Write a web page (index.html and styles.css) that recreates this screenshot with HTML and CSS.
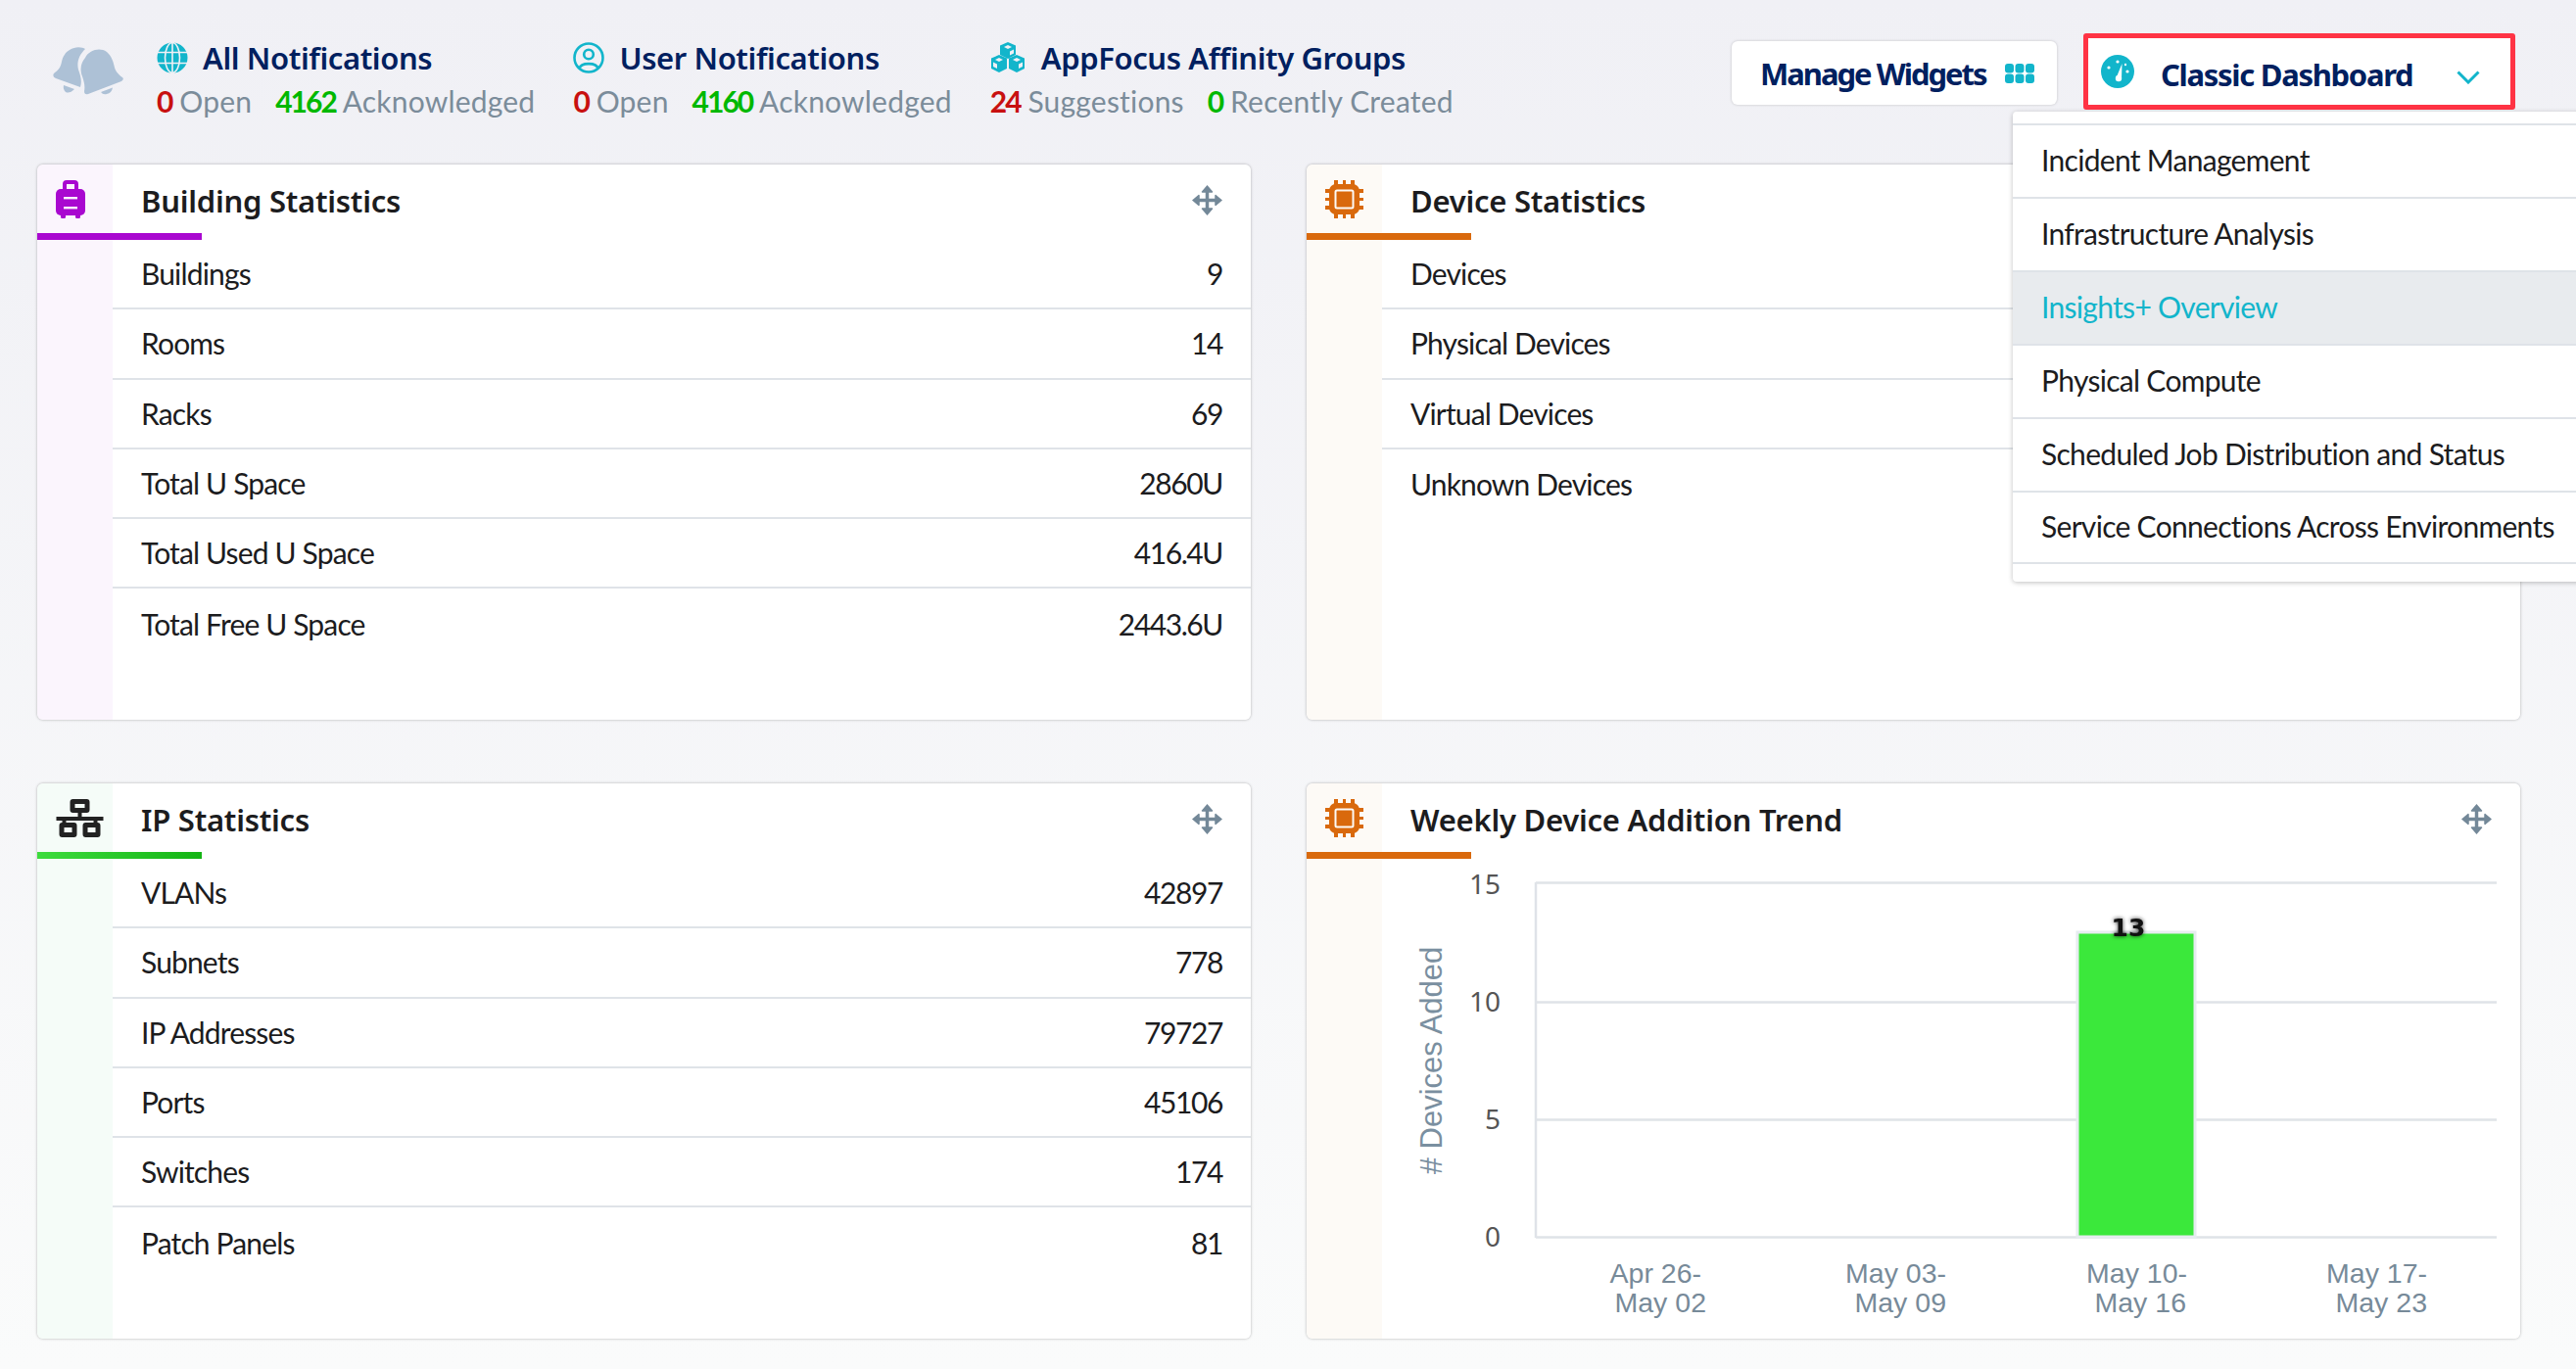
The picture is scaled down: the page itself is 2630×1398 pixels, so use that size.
FILE: index.html
```html
<!DOCTYPE html>
<html lang="en">
<head>
    <meta charset="UTF-8">
    <meta name="viewport" content="width=device-width, initial-scale=1.0">
    <title>Classic Dashboard</title>
    <link rel="stylesheet" href="styles.css">
</head>
<body>
    <header class="topbar">
        <svg class="bell-icon" viewBox="0 0 72 50">
            <path d="M17 3C23-1 30 0 33 2C27 8 24 15 26 23C28 29 30 34 28 41L3 32Q-1 30 1 27C5 24 8 21 9 15C10 10 13 5 17 3Z"/>
            <path d="M33 11C37 3 48 0 55 5C60 9 62 16 63 21C64 25 68 29 71 31Q73 33 70 35L36 48Q32 49 32 45C33 40 32 36 30 30C27 22 29 16 33 11Z"/>
            <path d="M11 39L22 43Q17 48 13 46Q10 43 11 39Z"/>
            <path d="M49 46L61 41.500Q60 47 55 48Q51 49 49 46Z"/>
        </svg>
        <div class="notif">
            <div class="notif-title">
                <svg class="notif-icon" viewBox="0 0 32 32">
                    <circle cx="16" cy="16" r="15.500" fill="#12b5cb"/>
                    <g fill="none" stroke="#f0f0f5" stroke-width="1.600">
                        <ellipse cx="16" cy="16" rx="7.500" ry="15.500"/>
                        <path d="M16 0V32M1 10.500H31M1 21.500H31"/>
                    </g>
                </svg>
                <span>All Notifications</span>
            </div>
            <div class="notif-sub">
                <span><b class="red">0</b> Open</span>
                <span><b class="green">4162</b> Acknowledged</span>
            </div>
        </div>
        <div class="notif">
            <div class="notif-title">
                <svg class="notif-icon" viewBox="0 0 32 32">
                    <g fill="none" stroke="#12b5cb" stroke-width="2.600">
                        <circle cx="16" cy="16" r="14.500"/>
                        <circle cx="16" cy="12.500" r="4.800"/>
                        <path d="M6.500 27C8 20.500 24 20.500 25.500 27"/>
                    </g>
                </svg>
                <span>User Notifications</span>
            </div>
            <div class="notif-sub">
                <span><b class="red">0</b> Open</span>
                <span><b class="green">4160</b> Acknowledged</span>
            </div>
        </div>
        <div class="notif">
            <div class="notif-title">
                <svg class="notif-icon cubes" viewBox="0 0 36 32">
                    <g fill="#12b5cb">
                        <path d="M18 0L26 3.500V13L18 17L10 13V3.500Z"/>
                        <path d="M9 13L17 16.500V27L9 31L1 27V16.500Z"/>
                        <path d="M27 13L35 16.500V27L27 31L19 27V16.500Z"/>
                    </g>
                    <g fill="#f0f0f5">
                        <path d="M18 3L22 5L18 7L14 5Z"/>
                        <path d="M20 9.500L24 7.500V11.500L20 13.500Z"/>
                        <path d="M9 16L13 18L9 20L5 18Z"/>
                        <path d="M3 20.500L7 22.500V27L3 25Z"/>
                        <path d="M27 16L31 18L27 20L23 18Z"/>
                        <path d="M29 22.500L33 20.500V25L29 27Z"/>
                    </g>
                </svg>
                <span>AppFocus Affinity Groups</span>
            </div>
            <div class="notif-sub">
                <span><b class="red">24</b> Suggestions</span>
                <span><b class="green">0</b> Recently Created</span>
            </div>
        </div>

        <div class="actions">
            <button class="manage-btn">
                <span>Manage Widgets</span>
                <svg class="grid-icon" viewBox="0 0 30 20" fill="#12b5cb">
                    <rect x="0" y="0" width="9" height="9.500" rx="3"/>
                    <rect x="10.500" y="0" width="9" height="9.500" rx="3"/>
                    <rect x="21" y="0" width="9" height="9.500" rx="3"/>
                    <rect x="0" y="10.500" width="9" height="9.500" rx="3"/>
                    <rect x="10.500" y="10.500" width="9" height="9.500" rx="3"/>
                    <rect x="21" y="10.500" width="9" height="9.500" rx="3"/>
                </svg>
            </button>
            <div class="dash-select">
                <svg class="gauge-icon" viewBox="0 0 34 34">
                    <circle cx="17" cy="17" r="17" fill="#12b5cb"/>
                    <g fill="#fff">
                        <circle cx="8" cy="13" r="1.600"/>
                        <circle cx="17" cy="7" r="1.600"/>
                        <circle cx="27" cy="17" r="1.600"/>
                        <circle cx="25" cy="10" r="1.200"/>
                        <circle cx="18" cy="24" r="3.200"/>
                        <path d="M15.800 23L21.500 9L21 24.500Z"/>
                    </g>
                </svg>
                <span class="dash-name">Classic Dashboard</span>
                <svg class="chevron" viewBox="0 0 24 14">
                    <path d="M1.500 1.500L12 12L22.500 1.500" fill="none" stroke="#12b5cb" stroke-width="3"/>
                </svg>
            </div>
        </div>

        <ul class="dash-menu">
            <li>Incident Management</li>
            <li>Infrastructure Analysis</li>
            <li class="active">Insights+ Overview</li>
            <li>Physical Compute</li>
            <li>Scheduled Job Distribution and Status</li>
            <li>Service Connections Across Environments</li>
        </ul>
    </header>

    <main class="widgets">
        <section class="card card-purple">
            <div class="card-head">
                <div class="card-icon">
                    <svg class="suitcase" viewBox="0 0 30 39">
                        <path d="M7 11V4Q7 0 11 0H19Q23 0 23 4V11H19V4H11V11Z" fill="#a908d0"/>
                        <rect x="0" y="9" width="30" height="27" rx="5" fill="#a908d0"/>
                        <rect x="5" y="35" width="5" height="4" rx="1.500" fill="#a908d0"/>
                        <rect x="20" y="35" width="5" height="4" rx="1.500" fill="#a908d0"/>
                        <rect x="8" y="17" width="14" height="2.400" fill="#fbf5fd"/>
                        <rect x="8" y="27" width="14" height="2.400" fill="#fbf5fd"/>
                    </svg>
                </div>
                <h2>Building Statistics</h2>
                <svg class="move-icon" viewBox="0 0 32 32">
                    <path d="M16 4V28M4 16H28" stroke="#738898" stroke-width="3.600"/>
                    <path d="M16 0L22 7Q22 8 21 8H11Q10 8 10 7ZM16 32L22 25Q22 24 21 24H11Q10 24 10 25ZM0 16L7 10Q8 10 8 11V21Q8 22 7 22ZM32 16L25 10Q24 10 24 11V21Q24 22 25 22Z" fill="#738898"/>
                </svg>
            </div>
            <ul class="stat-list">
                <li><span>Buildings</span><span>9</span></li>
                <li><span>Rooms</span><span>14</span></li>
                <li><span>Racks</span><span>69</span></li>
                <li><span>Total U Space</span><span>2860U</span></li>
                <li><span>Total Used U Space</span><span>416.4U</span></li>
                <li><span>Total Free U Space</span><span>2443.6U</span></li>
            </ul>
        </section>

        <section class="card card-orange">
            <div class="card-head">
                <div class="card-icon">
                    <svg class="chip" viewBox="0 0 39 39">
                        <g fill="#d9690d">
                            <path d="M9 0H13V6H9ZM18 0H21V6H18ZM26 0H30V6H26ZM9 33H13V39H9ZM18 33H21V39H18ZM26 33H30V39H26ZM0 9H6V13H0ZM0 18H6V21H0ZM0 26H6V30H0ZM33 9H39V13H33ZM33 18H39V21H33ZM33 26H39V30H33Z"/>
                            <rect x="4" y="4" width="31" height="31" rx="7"/>
                        </g>
                        <rect x="10.500" y="10.500" width="18" height="18" rx="1.500" fill="#d9690d" stroke="#fdfaf6" stroke-width="2"/>
                    </svg>
                </div>
                <h2>Device Statistics</h2>
            </div>
            <ul class="stat-list">
                <li><span>Devices</span></li>
                <li><span>Physical Devices</span></li>
                <li><span>Virtual Devices</span></li>
                <li><span>Unknown Devices</span></li>
            </ul>
        </section>

        <section class="card card-green">
            <div class="card-head">
                <div class="card-icon">
                    <svg class="network" viewBox="0 0 48 39" fill="#222">
                        <path fill-rule="evenodd" d="M17 0H31Q34 0 34 3V11Q34 14 31 14H26V18H48V22H42V24H42Q45 24 45 27V36Q45 39 42 39H30Q27 39 27 36V27Q27 24 30 24H38V22H10V24H18Q21 24 21 27V36Q21 39 18 39H6Q3 39 3 36V27Q3 24 6 24H6V22H0V18H22V14H17Q14 14 14 11V3Q14 0 17 0ZM19 5V9H29V5ZM8 29V34H16V29ZM32 29V34H40V29Z"/>
                    </svg>
                </div>
                <h2>IP Statistics</h2>
                <svg class="move-icon" viewBox="0 0 32 32">
                    <path d="M16 4V28M4 16H28" stroke="#738898" stroke-width="3.600"/>
                    <path d="M16 0L22 7Q22 8 21 8H11Q10 8 10 7ZM16 32L22 25Q22 24 21 24H11Q10 24 10 25ZM0 16L7 10Q8 10 8 11V21Q8 22 7 22ZM32 16L25 10Q24 10 24 11V21Q24 22 25 22Z" fill="#738898"/>
                </svg>
            </div>
            <ul class="stat-list">
                <li><span>VLANs</span><span>42897</span></li>
                <li><span>Subnets</span><span>778</span></li>
                <li><span>IP Addresses</span><span>79727</span></li>
                <li><span>Ports</span><span>45106</span></li>
                <li><span>Switches</span><span>174</span></li>
                <li><span>Patch Panels</span><span>81</span></li>
            </ul>
        </section>

        <section class="card card-orange">
            <div class="card-head">
                <div class="card-icon">
                    <svg class="chip" viewBox="0 0 39 39">
                        <g fill="#d9690d">
                            <path d="M9 0H13V6H9ZM18 0H21V6H18ZM26 0H30V6H26ZM9 33H13V39H9ZM18 33H21V39H18ZM26 33H30V39H26ZM0 9H6V13H0ZM0 18H6V21H0ZM0 26H6V30H0ZM33 9H39V13H33ZM33 18H39V21H33ZM33 26H39V30H33Z"/>
                            <rect x="4" y="4" width="31" height="31" rx="7"/>
                        </g>
                        <rect x="10.500" y="10.500" width="18" height="18" rx="1.500" fill="#d9690d" stroke="#fdfaf6" stroke-width="2"/>
                    </svg>
                </div>
                <h2>Weekly Device Addition Trend</h2>
                <svg class="move-icon" viewBox="0 0 32 32">
                    <path d="M16 4V28M4 16H28" stroke="#738898" stroke-width="3.600"/>
                    <path d="M16 0L22 7Q22 8 21 8H11Q10 8 10 7ZM16 32L22 25Q22 24 21 24H11Q10 24 10 25ZM0 16L7 10Q8 10 8 11V21Q8 22 7 22ZM32 16L25 10Q24 10 24 11V21Q24 22 25 22Z" fill="#738898"/>
                </svg>
            </div>
            <svg class="trend-chart" viewBox="0 0 1161 489">
                <g class="grid-lines">
                    <path d="M157 24.500H1138M157 146.500H1138M157 266.500H1138M157 386.500H1138M157 24V387"/>
                </g>
                <rect class="bar" x="710" y="75" width="120" height="311"/>
                <text class="bar-label" x="762" y="79">13</text>
                <g class="y-ticks">
                    <text x="121" y="36">15</text>
                    <text x="121" y="156">10</text>
                    <text x="121" y="276">5</text>
                    <text x="121" y="396">0</text>
                </g>
                <text class="y-title" transform="translate(61 206) rotate(-90)">
                    # Devices Added
                </text>
                <g class="x-ticks">
                    <text x="326" y="433">Apr 26-</text>
                    <text x="331" y="463">May 02</text>
                    <text x="576" y="433">May 03-</text>
                    <text x="576" y="463">May 09</text>
                    <text x="822" y="433">May 10-</text>
                    <text x="821" y="463">May 16</text>
                    <text x="1067" y="433">May 17-</text>
                    <text x="1067" y="463">May 23</text>
                </g>
            </svg>
        </section>
    </main>
</body>
</html>
```

FILE: styles.css
```css
* {
    box-sizing: border-box;
}

body {
    margin: 0;
    height: 100vh;
    overflow: hidden;
    background: linear-gradient(#f0f0f5, #fafbfb);
    color: #1c1c1e;
    font-family: "Lato", sans-serif;
}

/* top bar */
.topbar {
    position: relative;
    display: flex;
    align-items: flex-start;
    gap: 39px;
    height: 168px;
    padding: 43px 62px 0 54px;
}

.bell-icon {
    width: 72px;
    height: 50px;
    margin: 5px -5px 0 0;
    fill: #adc1d6;
}

.notif-title {
    display: flex;
    align-items: center;
    gap: 15px;
    height: 31px;
    color: #00205f;
    font-family: "Noto Sans", sans-serif;
    font-size: 31px;
    font-weight: 600;
    letter-spacing: -0.4px;
    white-space: nowrap;
}

.notif-icon {
    width: 32px;
    height: 32px;
}

.notif-icon.cubes {
    width: 36px;
    margin-right: 1px;
}

.notif-sub {
    display: flex;
    gap: 24px;
    margin-top: 13px;
    color: #7b8c9a;
    font-size: 30px;
    line-height: 32px;
    letter-spacing: 0.2px;
    white-space: nowrap;
}

.notif-sub b {
    font-weight: 700;
    letter-spacing: -2px;
}

.red { color: #c81010; }
.green { color: #00b800; }

.actions {
    display: flex;
    align-items: flex-start;
    gap: 27px;
    margin: -9px 0 0 auto;
}

.manage-btn {
    display: flex;
    align-items: center;
    gap: 19px;
    width: 332px;
    height: 65px;
    margin-top: 8px;
    padding: 0 0 0 29px;
    background: #fff;
    border: none;
    border-radius: 6px;
    box-shadow: 0 0 3px rgba(0, 0, 0, 0.2);
    color: #00205f;
    font-family: "Noto Sans", sans-serif;
    font-size: 31px;
    font-weight: 700;
    letter-spacing: -2px;
}

.grid-icon {
    width: 30px;
    height: 20px;
}

.dash-select {
    display: flex;
    align-items: center;
    width: 441px;
    height: 78px;
    padding-left: 13px;
    background: #fff;
    border: 5px solid #ff3344;
    border-radius: 3px;
    color: #00205f;
    font-family: "Noto Sans", sans-serif;
    font-size: 31px;
    font-weight: 700;
    letter-spacing: -1.3px;
}

.gauge-icon {
    width: 34px;
    height: 34px;
}

.dash-name {
    margin: 5px 45px 0 27px;
    white-space: nowrap;
}

.chevron {
    width: 24px;
    height: 14px;
    margin-top: 12px;
}

/* dropdown */
.dash-menu {
    position: absolute;
    top: 114px;
    left: 2055px;
    z-index: 5;
    width: 640px;
    height: 480px;
    margin: 0;
    padding: 12px 0 0;
    background: #fff;
    box-shadow: 0 1px 5px rgba(0, 0, 0, 0.25);
    border-radius: 4px;
    list-style: none;
    font-size: 30px;
    letter-spacing: -0.7px;
}

.dash-menu li {
    display: flex;
    align-items: center;
    height: 75px;
    padding: 0 0 3px 29px;
    border-top: 2px solid #dfe3e8;
}

.dash-menu li:last-child {
    border-bottom: 2px solid #dfe3e8;
}

.dash-menu .active {
    background: #e8ebee;
    color: #12b5cb;
}

/* widget cards */
.widgets {
    display: grid;
    grid-template-columns: 1fr 1fr;
    grid-auto-rows: 567px;
    gap: 65px 57px;
    padding: 0 57px 0 38px;
}

.card {
    border-radius: 6px;
    box-shadow: 0 0 3px rgba(0, 0, 0, 0.3);
    overflow: hidden;
}

.card-purple { background: linear-gradient(to right, #fbf5fd 77px, #fff 77px); }
.card-orange { background: linear-gradient(to right, #fdfaf6 77px, #fff 77px); }
.card-green { background: linear-gradient(to right, #f5fcf8 77px, #fff 77px); }

.card-head {
    position: relative;
    display: flex;
    align-items: center;
    height: 77px;
    padding-right: 29px;
}

.card-head::after {
    content: "";
    position: absolute;
    left: 0;
    bottom: 0;
    width: 168px;
    height: 7px;
}

.card-purple .card-head::after { background: #a908d0; }
.card-orange .card-head::after { background: #d9690d; }
.card-green .card-head::after { background: linear-gradient(to right, #3ddc3d, #14b414); }

.card-icon {
    display: flex;
    justify-content: center;
    flex: none;
    width: 77px;
    margin-top: -6px;
}

.suitcase { width: 30px; height: 39px; margin-left: -9px; }
.chip { width: 39px; height: 39px; }
.network { width: 49px; height: 39px; margin-left: 10px; }

.card-head h2 {
    flex: 1;
    margin: -4px 0 0 29px;
    font-family: "Noto Sans", sans-serif;
    font-size: 31px;
    font-weight: 600;
    letter-spacing: -0.25px;
}

.move-icon {
    width: 31px;
    height: 31px;
    margin-top: -5px;
}

.stat-list {
    margin: 0 0 0 77px;
    padding: 0;
    list-style: none;
    font-size: 30px;
    letter-spacing: -0.85px;
}

.stat-list li {
    display: flex;
    justify-content: space-between;
    align-items: center;
    height: 71.3px;
    padding: 0 29px 1px 29px;
    border-bottom: 2px solid #dfe3e8;
}

.stat-list li:last-child {
    border-bottom: none;
}

.stat-list span + span {
    letter-spacing: -1.4px;
}

/* chart */
.trend-chart {
    display: block;
    width: 1161px;
    height: 489px;
    margin-left: 77px;
}

.grid-lines path {
    fill: none;
    stroke: #dfe3e8;
    stroke-width: 2.500;
}

.bar {
    fill: #3be83b;
    stroke: #e6ecef;
    stroke-width: 3;
}

.bar-label {
    fill: #111;
    font-family: "DejaVu Sans", sans-serif;
    font-size: 25px;
    font-weight: 700;
    text-anchor: middle;
    filter: drop-shadow(0 0 2px rgba(0, 0, 0, 0.8));
}

.y-ticks text {
    fill: #555;
    font-family: "Noto Sans", sans-serif;
    font-size: 28px;
    text-anchor: end;
}

.y-title {
    fill: #7a8fa0;
    font-family: "Liberation Sans", sans-serif;
    font-size: 31px;
    text-anchor: middle;
}

.x-ticks text {
    fill: #778a99;
    font-family: "Liberation Sans", sans-serif;
    font-size: 28.500px;
    text-anchor: end;
}
```
